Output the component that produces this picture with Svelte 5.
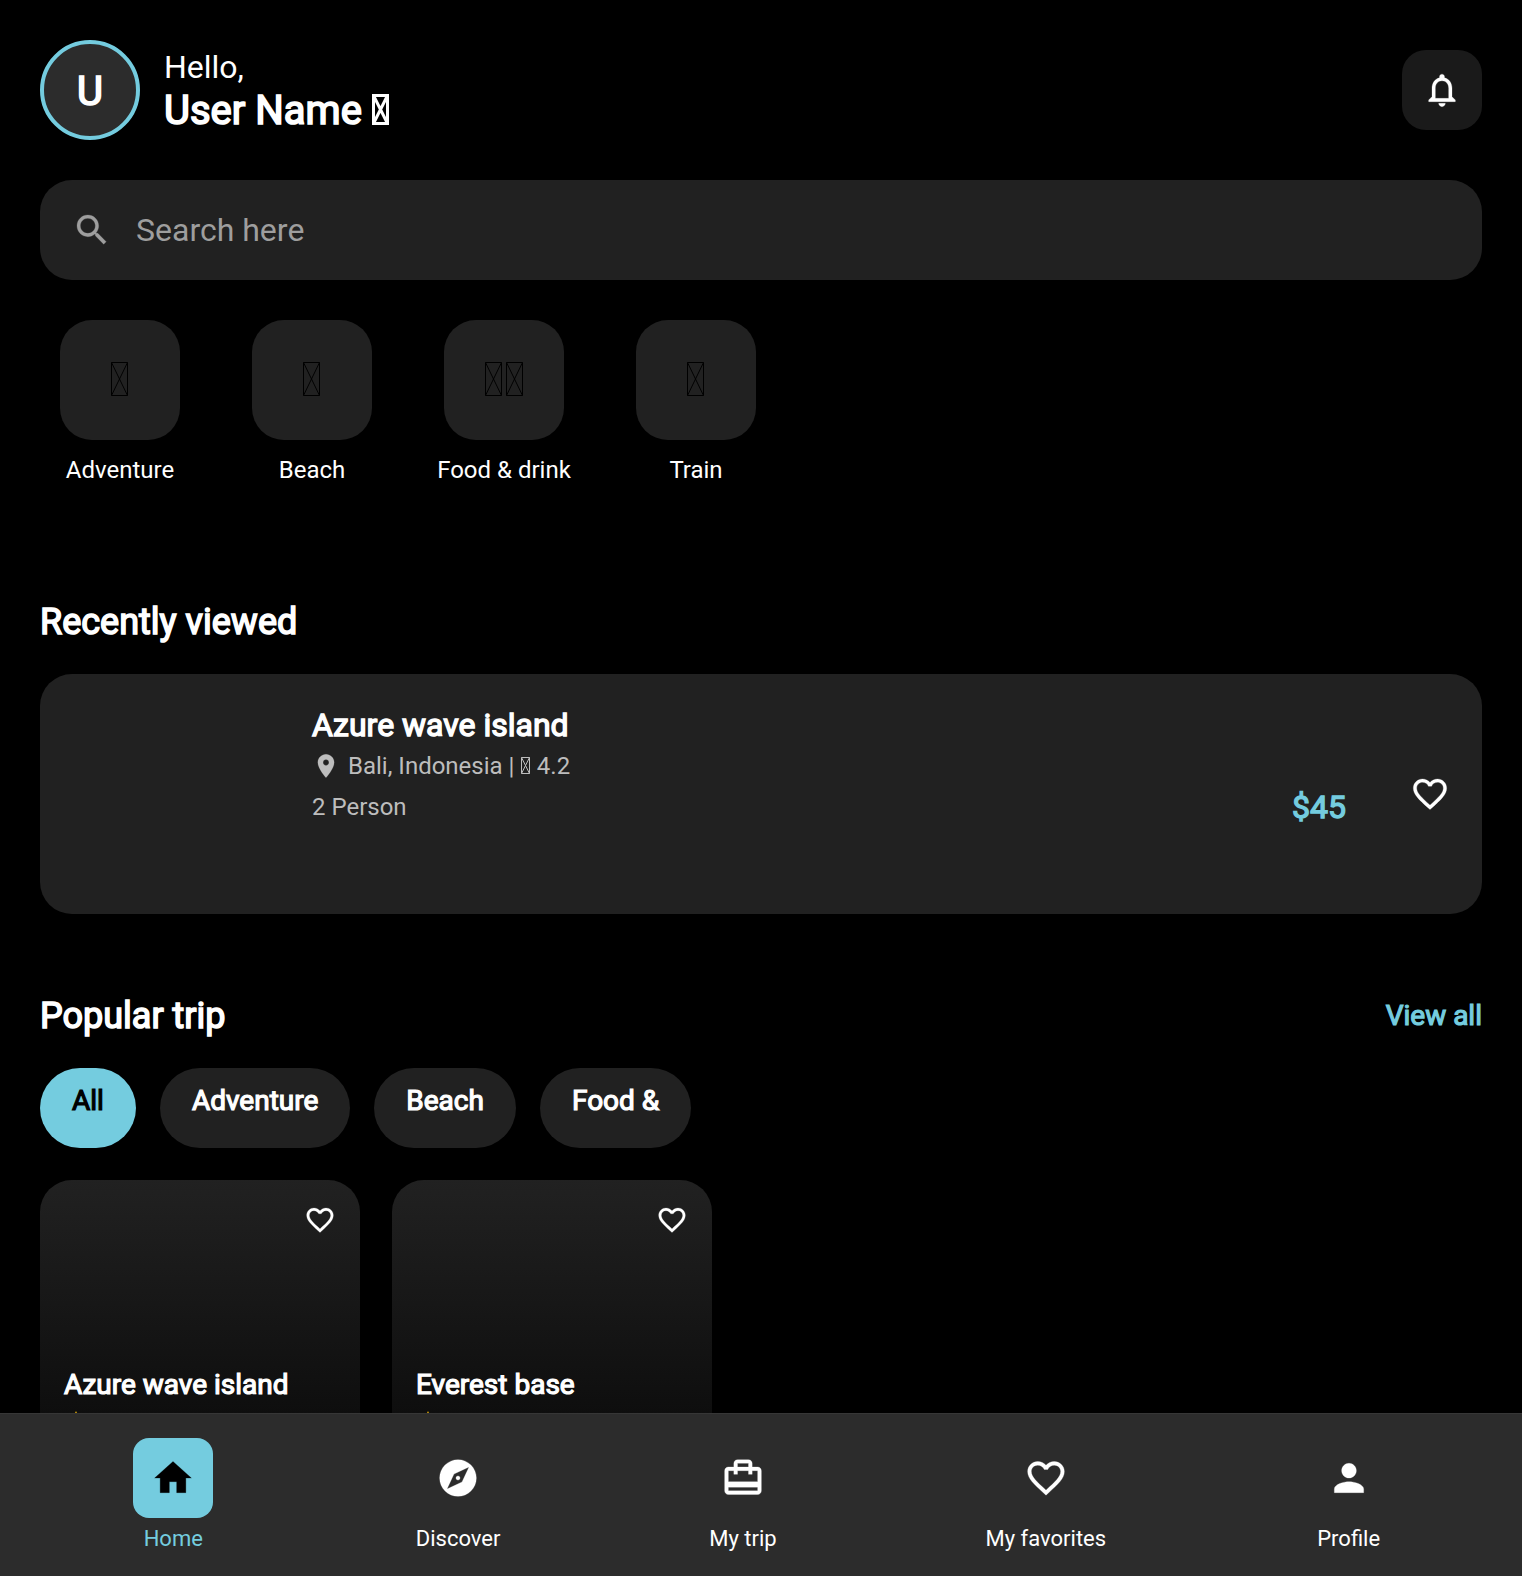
<script>
  const categories = [
    { label: 'Adventure', boxes: 1 },
    { label: 'Beach', boxes: 1 },
    { label: 'Food & drink', boxes: 2 },
    { label: 'Train', boxes: 1 }
  ];
  const filters = ['All', 'Adventure', 'Beach', 'Food &'];
  const trips = ['Azure wave island', 'Everest base'];
  const heart = 'M16.5 3c-1.74 0-3.41.81-4.5 2.09C10.91 3.81 9.24 3 7.5 3 4.42 3 2 5.42 2 8.5c0 3.78 3.4 6.86 8.55 11.54L12 21.35l1.45-1.32C18.6 15.36 22 12.28 22 8.5 22 5.42 19.58 3 16.5 3zm-4.4 15.55l-.1.1-.1-.1C7.14 14.24 4 11.39 4 8.5 4 6.5 5.5 5 7.5 5c1.54 0 3.04.99 3.57 2.36h1.87C13.46 5.99 14.96 5 16.5 5c2 0 3.5 1.5 3.5 3.5 0 2.89-3.14 5.74-7.9 10.05z';
  const nav = [
    { label: 'Home', icon: 'M10 20v-6h4v6h5v-8h3L12 3 2 12h3v8z' },
    { label: 'Discover', icon: 'M12 10.9c-.61 0-1.1.49-1.1 1.1s.49 1.1 1.1 1.1c.61 0 1.1-.49 1.1-1.1s-.49-1.1-1.1-1.1zM12 2C6.48 2 2 6.48 2 12s4.48 10 10 10 10-4.48 10-10S17.52 2 12 2zm2.19 12.19L6 18l3.81-8.19L18 6l-3.81 8.19z' },
    { label: 'My trip', icon: 'M20 6h-3V4c0-1.11-.89-2-2-2H9c-1.11 0-2 .89-2 2v2H4c-1.11 0-2 .89-2 2v11c0 1.11.89 2 2 2h16c1.11 0 2-.89 2-2V8c0-1.11-.89-2-2-2zM9 4h6v2H9V4zm11 15H4v-2h16v2zm0-5H4V8h3v2h2V8h6v2h2V8h3v6z' },
    { label: 'My favorites', icon: heart },
    { label: 'Profile', icon: 'M12 12c2.21 0 4-1.79 4-4s-1.79-4-4-4-4 1.79-4 4 1.79 4 4 4zm0 2c-2.67 0-8 1.34-8 4v2h16v-2c0-2.66-5.33-4-8-4z' }
  ];
</script>

{#snippet icon(path, cls)}
  <svg class="icon {cls}" viewBox="0 0 24 24" aria-hidden="true"><path d={path} /></svg>
{/snippet}

<div class="app">
  <main>
    <header>
      <div class="avatar bold">U</div>
      <div class="greeting">
        <div class="hello">Hello,</div>
        <div class="name bold">User Name
          <svg class="tofu" viewBox="0 0 17 31"><path d="M1.5 1.5h14v28h-14zL15.500 29.500M15.500 1.500L1.500 29.500" /></svg>
        </div>
      </div>
      <button class="bell" aria-label="Notifications">
        {@render icon('M12 22c1.1 0 2-.9 2-2h-4c0 1.1.9 2 2 2zm6-6v-5c0-3.07-1.63-5.64-4.5-6.32V4c0-.83-.67-1.5-1.5-1.5s-1.5.67-1.5 1.5v.68C7.64 5.36 6 7.92 6 11v5l-2 2v1h16v-1l-2-2zm-2 1H8v-6c0-2.48 1.51-4.5 4-4.5s4 2.02 4 4.5v6z', 's40')}
      </button>
    </header>

    <div class="search">
      {@render icon('M15.5 14h-.79l-.28-.27C15.41 12.59 16 11.11 16 9.500 16 5.910 13.090 3 9.500 3S3 5.910 3 9.500 5.910 16 9.500 16c1.610 0 3.090-.59 4.230-1.570l.27.28v.79l5 4.990L20.490 19l-4.990-5zm-6 0C7.010 14 5 11.990 5 9.500S7.010 5 9.500 5 14 7.010 14 9.500 11.990 14 9.500 14z', 's40')}
      <span>Search here</span>
    </div>

    <div class="categories">
      {#each categories as c}
        <div class="category">
          <div class="tile">
            {#each Array(c.boxes) as _}
              <svg class="tofu" viewBox="0 0 17 34"><path d="M.5.5h16v33H.5zL16.500 33.500M16.500.5L.5 33.500" /></svg>
            {/each}
          </div>
          <span>{c.label}</span>
        </div>
      {/each}
    </div>

    <h2 class="bold">Recently viewed</h2>
    <section class="recent">
      <div class="photo"></div>
      <div class="info">
        <div class="title bold">Azure wave island</div>
        <div class="place">
          {@render icon('M12 2C8.130 2 5 5.130 5 9c0 5.250 7 13 7 13s7-7.750 7-13c0-3.870-3.130-7-7-7zm0 9.500c-1.380 0-2.500-1.120-2.500-2.500s1.120-2.500 2.500-2.500 2.500 1.120 2.500 2.500-1.120 2.500-2.500 2.500z', 's28')}
          <span>Bali, Indonesia |
            <svg class="tofu" viewBox="0 0 9 17"><path d="M.5.5h8v16h-8zL8.500 16.500M8.500.5L.5 16.500" /></svg>
            4.2</span>
        </div>
        <div class="bottom"><span>2 Person</span><span class="price bold">$45</span></div>
      </div>
      {@render icon(heart, 's40')}
    </section>

    <div class="heading">
      <h2 class="bold">Popular trip</h2>
      <span class="all bold">View all</span>
    </div>
    <div class="chips">
      {#each filters as f, i}
        <div class="chip bold" class:active={i === 0}>{f}</div>
      {/each}
    </div>
    <div class="trips">
      {#each trips as t}
        <article>
          {@render icon(heart, 's32')}
          <div class="title bold">{t}</div>
          {@render icon('M12 17.270L18.180 21l-1.640-7.030L22 9.240l-7.190-.61L12 2 9.190 8.630 2 9.240l5.460 4.730L5.820 21z', 'star')}
        </article>
      {/each}
    </div>
  </main>

  <nav>
    {#each nav as n, i}
      <div class="item" class:active={i === 0}>
        <div class="badge">{@render icon(n.icon, 's44')}</div>
        <span>{n.label}</span>
      </div>
    {/each}
  </nav>
</div>

<style>
  :global(body) { background: #000; }
  .app {
    display: flex;
    flex-direction: column;
    height: 1576px;
    overflow: hidden;
    background: #000;
    color: #fff;
    font-family: Roboto, sans-serif;
    font-weight: 400;
    white-space: nowrap;
  }
  .bold { -webkit-text-stroke: 0.042em currentColor; }
  .icon { display: block; flex: none; fill: currentColor; stroke: currentColor; stroke-width: 0.15; }
  .s28 { width: 28px; height: 28px; }
  .s32 { width: 32px; height: 32px; }
  .s40 { width: 40px; height: 40px; }
  .s44 { width: 44px; height: 44px; }
  .tofu { fill: none; stroke: currentColor; stroke-width: 1; }

  main {
    flex: 1;
    min-height: 0;
    overflow: hidden;
    padding: 40px 40px 0;
  }
  header { display: flex; align-items: center; height: 100px; }
  .avatar {
    display: flex;
    align-items: center;
    justify-content: center;
    box-sizing: border-box;
    width: 100px;
    height: 100px;
    padding-top: 2px;
    border: 4px solid #74ccdf;
    border-radius: 50%;
    background: #2c2c2c;
    font-size: 40px;
  }
  .greeting { flex: 1; margin-left: 24px; padding-top: 2px; }
  .hello { font-size: 32px; line-height: 38px; }
  .name { font-size: 40px; line-height: 48px; padding-top: 1px; margin-bottom: -1px; }
  .name .tofu { width: 17px; height: 31px; stroke-width: 3; vertical-align: -1px; }
  .bell {
    display: flex;
    align-items: center;
    justify-content: center;
    width: 80px;
    height: 80px;
    padding: 0;
    border: 0;
    border-radius: 24px;
    background: #1a1a1a;
    color: #fff;
  }
  .search {
    display: flex;
    align-items: center;
    gap: 24px;
    height: 100px;
    margin-top: 40px;
    padding: 0 32px;
    box-sizing: border-box;
    border-radius: 32px;
    background: #212121;
    color: #9e9e9e;
    font-size: 32px;
  }
  .categories { display: flex; gap: 32px; height: 240px; margin-top: 40px; }
  .category {
    display: flex;
    flex-direction: column;
    align-items: center;
    width: 160px;
    font-size: 24px;
    line-height: 28px;
  }
  .tile {
    display: flex;
    align-items: center;
    justify-content: center;
    gap: 4px;
    width: 120px;
    height: 120px;
    margin-bottom: 16px;
    padding: 0 1px 2px 0;
    box-sizing: border-box;
    border-radius: 32px;
    background: #212121;
    color: #000;
  }
  .tile .tofu { width: 17px; height: 34px; }
  h2 { margin: 0; font-size: 36px; font-weight: 400; line-height: 44px; }
  main > h2 { margin-top: 40px; }
  .recent {
    display: flex;
    align-items: center;
    height: 240px;
    margin-top: 30px;
    padding-right: 32px;
    box-sizing: border-box;
    border-radius: 32px;
    background: #212121;
  }
  .photo { width: 240px; height: 240px; }
  .info { flex: 1; align-self: stretch; margin: 0 64px 0 32px; padding-top: 32px; }
  .info .title { font-size: 32px; line-height: 38px; }
  .place, .bottom { display: flex; align-items: center; color: #bdbdbd; font-size: 24px; line-height: 28px; }
  .place { gap: 8px; margin-top: 8px; }
  .place .tofu { width: 9px; height: 17px; margin: 0 0.5px 0 1px; }
  .bottom { justify-content: space-between; margin-top: 8px; line-height: 38px; }
  .price { color: #74ccdf; font-size: 32px; }
  .heading { display: flex; align-items: center; justify-content: space-between; margin-top: 80px; }
  .all { color: #74ccdf; font-size: 28px; padding-bottom: 2px; }
  .chips { display: flex; gap: 24px; margin-top: 30px; }
  .chip {
    height: 80px;
    padding: 16px 32px 0;
    box-sizing: border-box;
    border-radius: 40px;
    background: #212121;
    font-size: 28px;
    line-height: 33px;
  }
  .chip.active { background: #74ccdf; color: #000; }
  .trips { display: flex; gap: 32px; margin-top: 32px; }
  article {
    display: flex;
    flex-direction: column;
    width: 320px;
    height: 320px;
    padding: 24px;
    box-sizing: border-box;
    border-radius: 32px;
    background: linear-gradient(#212121, #070707);
  }
  article .s32 { align-self: flex-end; }
  article .title { margin-top: 132px; font-size: 28px; line-height: 33px; }
  .star { width: 24px; height: 24px; margin-top: 8px; fill: #ffc107; stroke: none; }

  nav {
    display: flex;
    justify-content: space-around;
    height: 163px;
    padding: 24px 32px 0;
    box-sizing: border-box;
    border-top: 1px solid #363636;
    background: #2c2c2c;
  }
  .item { display: flex; flex-direction: column; align-items: center; font-size: 22px; line-height: 26px; }
  .badge {
    display: flex;
    align-items: center;
    justify-content: center;
    width: 80px;
    height: 80px;
    margin-bottom: 8px;
    border-radius: 16px;
  }
  .active .badge { background: #74ccdf; color: #000; }
  .item.active { color: #74ccdf; }
</style>
